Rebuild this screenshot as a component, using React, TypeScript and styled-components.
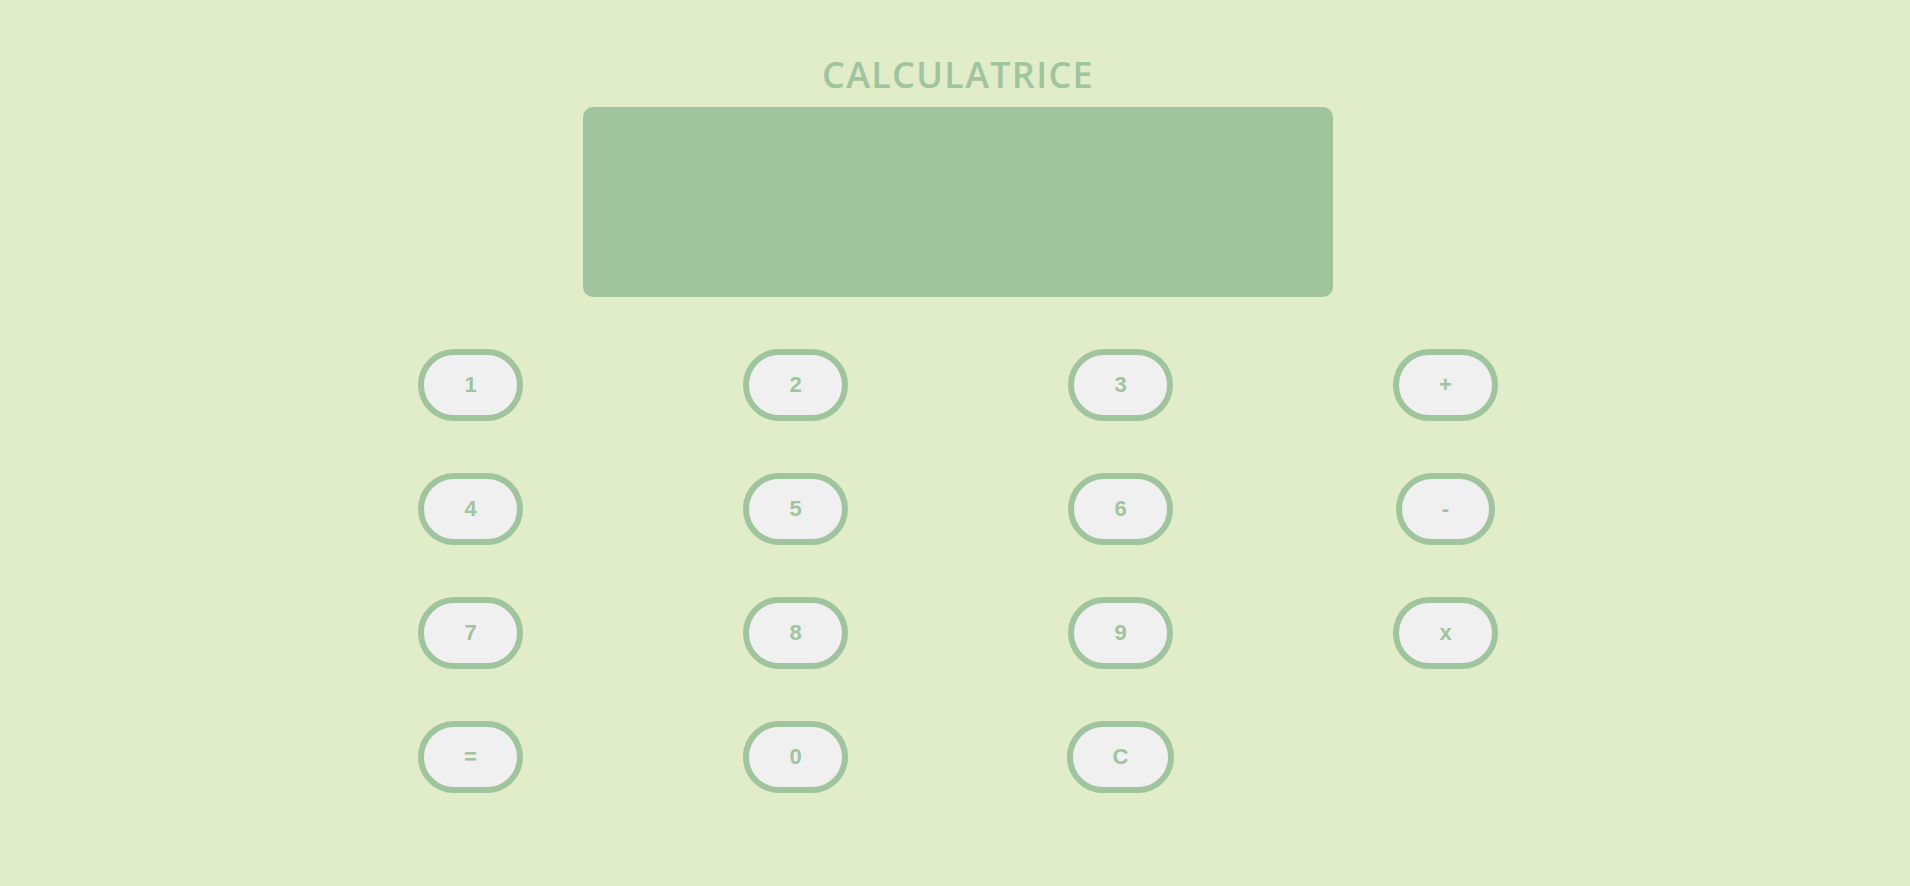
import React from "react";
import styled, { createGlobalStyle } from "styled-components";

const Global = createGlobalStyle`
  html, body { margin: 0; padding: 0; background: #e1ecc8; }
  body { font-family: "Liberation Sans", Arial, sans-serif; }
`;

const Page = styled.main`
  display: flex;
  flex-direction: column;
  align-items: center;
  padding-left: 6px;
  padding-top: 57px;
  min-height: 100vh;
  box-sizing: border-box;
`;

const Title = styled.h1`
  margin: 0;
  font-family: "Open Sans", "Noto Sans", sans-serif;
  font-weight: 600;
  font-size: 36px;
  letter-spacing: 1.3px;
  line-height: 1;
  color: #a0c49d;
`;

const Display = styled.div`
  margin-top: 14px;
  width: 750px;
  height: 190px;
  background: #a0c49d;
  border-radius: 10px;
`;

const Keypad = styled.div`
  margin-top: 52px;
  display: grid;
  grid-template-columns: repeat(4, 325px);
  grid-auto-rows: 72px;
  row-gap: 52px;
  justify-items: center;
`;

const Key = styled.button`
  box-sizing: border-box;
  height: 72px;
  padding: 0 40px;
  border: 6px solid #a0c49d;
  border-radius: 999px;
  background: #f0f0f0;
  color: #a0c49d;
  font-family: "Liberation Sans", Arial, sans-serif;
  font-weight: 700;
  font-size: 22px;
  line-height: 24px;
  cursor: pointer;
`;

const keys = ["1", "2", "3", "+", "4", "5", "6", "-", "7", "8", "9", "x", "=", "0", "C"];

export default function App() {
  return (
    <>
      <Global />
      <Page>
        <Title>CALCULATRICE</Title>
        <Display />
        <Keypad>
          {keys.map((k) => (
            <Key key={k}>{k}</Key>
          ))}
        </Keypad>
      </Page>
    </>
  );
}
